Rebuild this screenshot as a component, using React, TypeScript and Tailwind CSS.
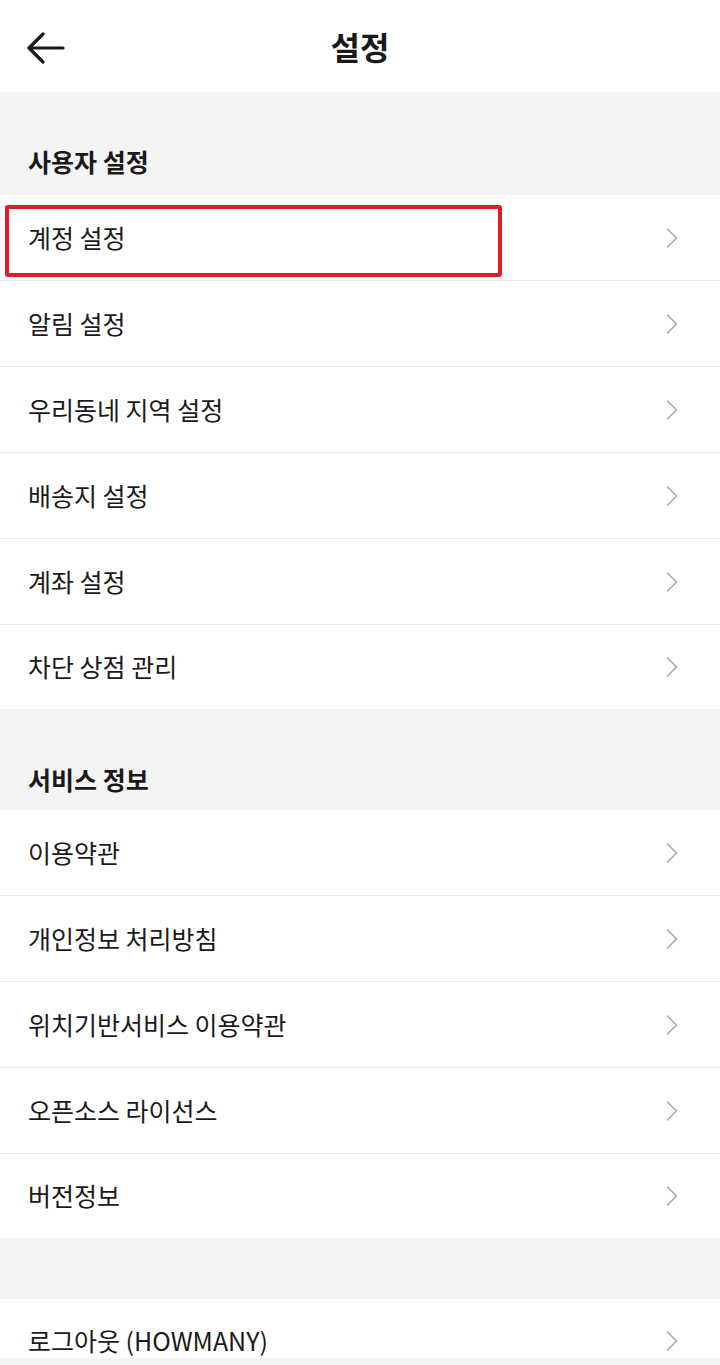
const userItems = ['계정 설정', '알림 설정', '우리동네 지역 설정', '배송지 설정', '계좌 설정', '차단 상점 관리'];
const serviceItems = ['이용약관', '개인정보 처리방침', '위치기반서비스 이용약관', '오픈소스 라이선스', '버전정보'];

const Chevron = () => (
  <svg width="12" height="20" viewBox="0 0 12 20" fill="none" className="shrink-0">
    <path d="M1.5 1 L10.5 10 L1.5 19" stroke="#a8a8a8" strokeWidth="1.5" strokeLinecap="round" strokeLinejoin="round" />
  </svg>
);

const Row = ({ label, last, highlight }: { label: string; last?: boolean; highlight?: boolean }) => (
  <div className={`relative flex items-center justify-between bg-white pl-[28px] pr-[42px] ${last ? 'h-[84px]' : 'h-[86px] border-b border-[#ececec]'}`}>
    <span className="text-[25px] text-[#1a1a1a]">{label}</span>
    <Chevron />
    {highlight && (
      <div className="absolute left-[5px] top-[10px] h-[72px] w-[497px] rounded-[3px] border-[4px] border-[#e21b2a]" />
    )}
  </div>
);

const SectionTitle = ({ title, className }: { title: string; className: string }) => (
  <div className={`flex items-end bg-[#f4f4f4] px-[28px] ${className}`}>
    <span className="text-[25px] font-bold text-[#1a1a1a]">{title}</span>
  </div>
);

export default function App() {
  return (
    <div
      className="min-h-[1365px] w-[720px] bg-[#f4f4f4]"
      style={{ fontFamily: '"Noto Sans CJK KR", "Noto Sans", sans-serif' }}
    >
      <header className="relative flex h-[92px] items-center justify-center bg-white">
        <svg width="40" height="32" viewBox="0 0 40 32" fill="none" className="absolute left-[26px] top-[32px]">
          <path d="M3 16 H37 M17 2 L3 16 L17 30" stroke="#1a1a1a" strokeWidth="3.2" strokeLinecap="round" strokeLinejoin="round" />
        </svg>
        <h1 className="text-[32px] font-bold text-[#1a1a1a]">설정</h1>
      </header>

      <SectionTitle title="사용자 설정" className="h-[103px] pb-[15px]" />
      <div>
        {userItems.map((item, i) => (
          <Row key={item} label={item} last={i === userItems.length - 1} highlight={i === 0} />
        ))}
      </div>

      <SectionTitle title="서비스 정보" className="h-[101px] pb-[12px]" />
      <div>
        {serviceItems.map((item, i) => (
          <Row key={item} label={item} last={i === serviceItems.length - 1} />
        ))}
      </div>

      <div className="h-[61px]" />
      <div className="h-[59px] overflow-hidden">
        <Row label="로그아웃 (HOWMANY)" last />
      </div>
    </div>
  );
}
